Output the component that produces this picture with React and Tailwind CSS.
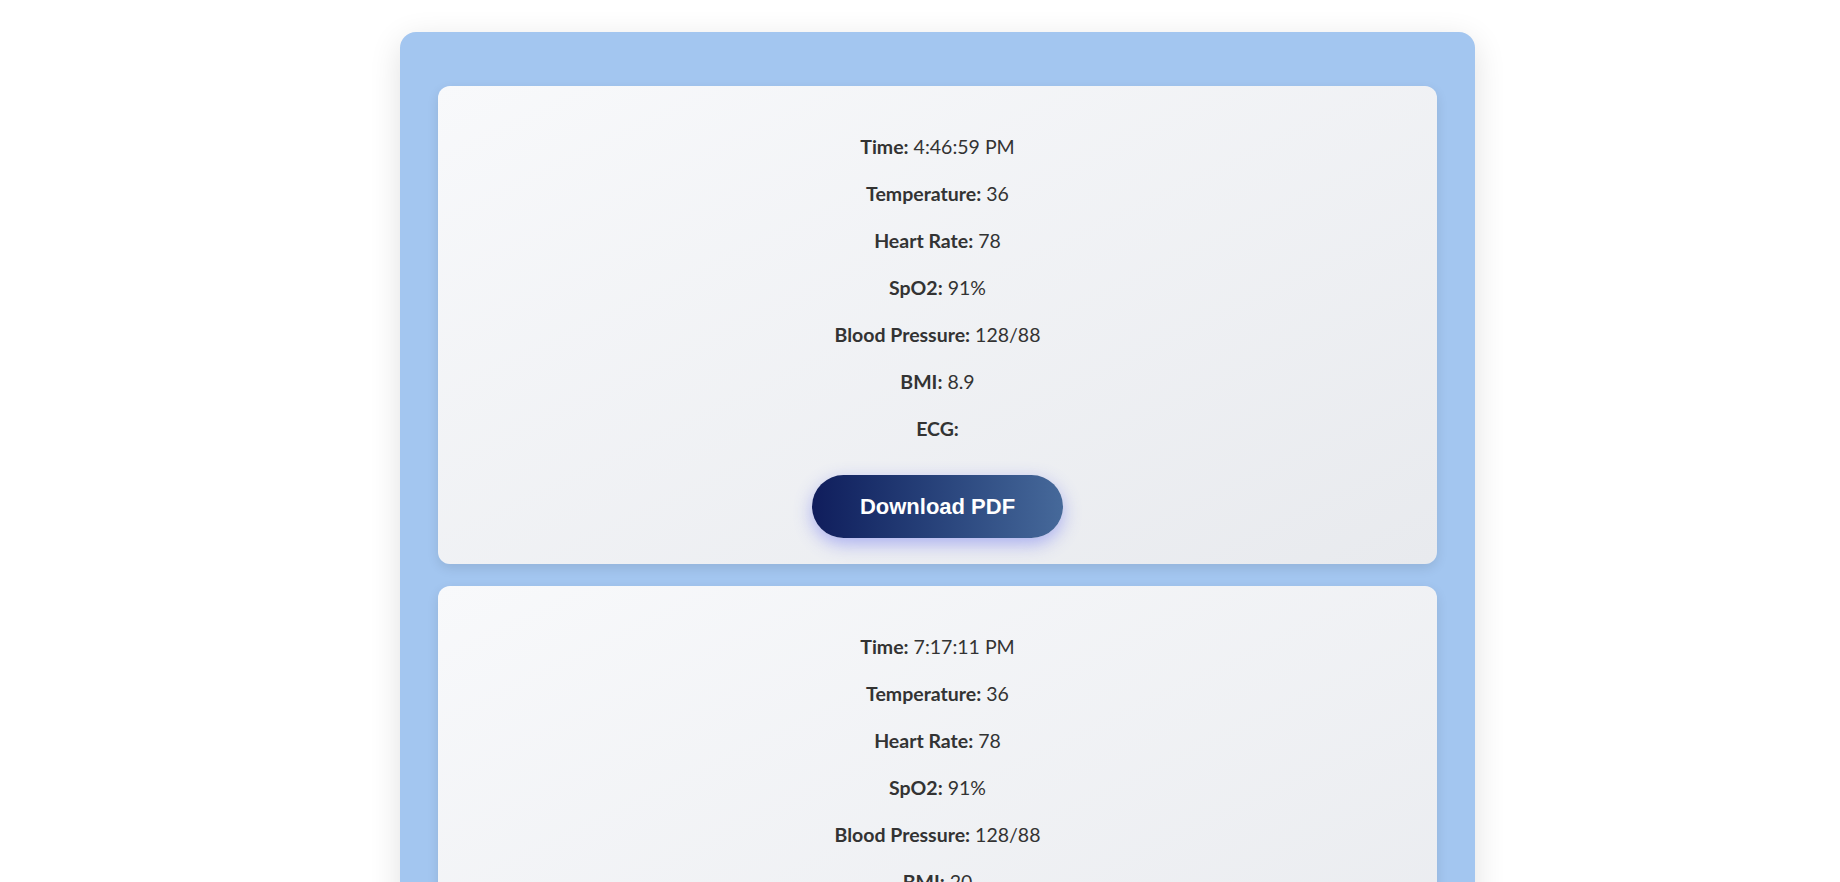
import React from "react";

const records = [
  { time: "4:46:59 PM", temp: "36", hr: "78", spo2: "91%", bp: "128/88", bmi: "8.9" },
  { time: "7:17:11 PM", temp: "36", hr: "78", spo2: "91%", bp: "128/88", bmi: "20" },
];

function Row({ label, value }) {
  return (
    <p className="leading-[29px] text-[19.5px] text-[#333]">
      <span className="font-bold">{label}</span>
      {value !== undefined && value !== "" ? " " + value : ""}
    </p>
  );
}

function Card({ r }) {
  return (
    <div className="rounded-[12px] bg-gradient-to-br from-[#f8f9fb] to-[#e8eaee] shadow-[0_4px_12px_rgba(0,0,0,0.1)] pt-[46px] pb-[26px] flex flex-col items-center">
      <div className="flex flex-col items-center gap-[18px]">
        <Row label="Time:" value={r.time} />
        <Row label="Temperature:" value={r.temp} />
        <Row label="Heart Rate:" value={r.hr} />
        <Row label="SpO2:" value={r.spo2} />
        <Row label="Blood Pressure:" value={r.bp} />
        <Row label="BMI:" value={r.bmi} />
        <Row label="ECG:" value="" />
      </div>
      <button
        className="mt-[32px] h-[63px] w-[251px] rounded-full bg-gradient-to-r from-[#101d5c] to-[#46699a] text-white font-bold text-[22px] shadow-[0_6px_18px_rgba(90,100,240,0.45)]"
        style={{ fontFamily: '"Liberation Sans", Arial, sans-serif' }}
      >
        Download PDF
      </button>
    </div>
  );
}

export default function App() {
  return (
    <div
      className="min-h-[882px] w-full bg-white pt-[32px] overflow-hidden"
      style={{ fontFamily: 'Lato, "Noto Sans", sans-serif' }}
    >
      <div className="ml-[400px] w-[1075px] rounded-[16px] bg-[#a3c6f0] shadow-[0_8px_32px_rgba(0,0,0,0.12)] px-[38px] pt-[54px] pb-[40px] flex flex-col gap-[22px]">
        {records.map((r, i) => (
          <Card key={i} r={r} />
        ))}
      </div>
    </div>
  );
}
